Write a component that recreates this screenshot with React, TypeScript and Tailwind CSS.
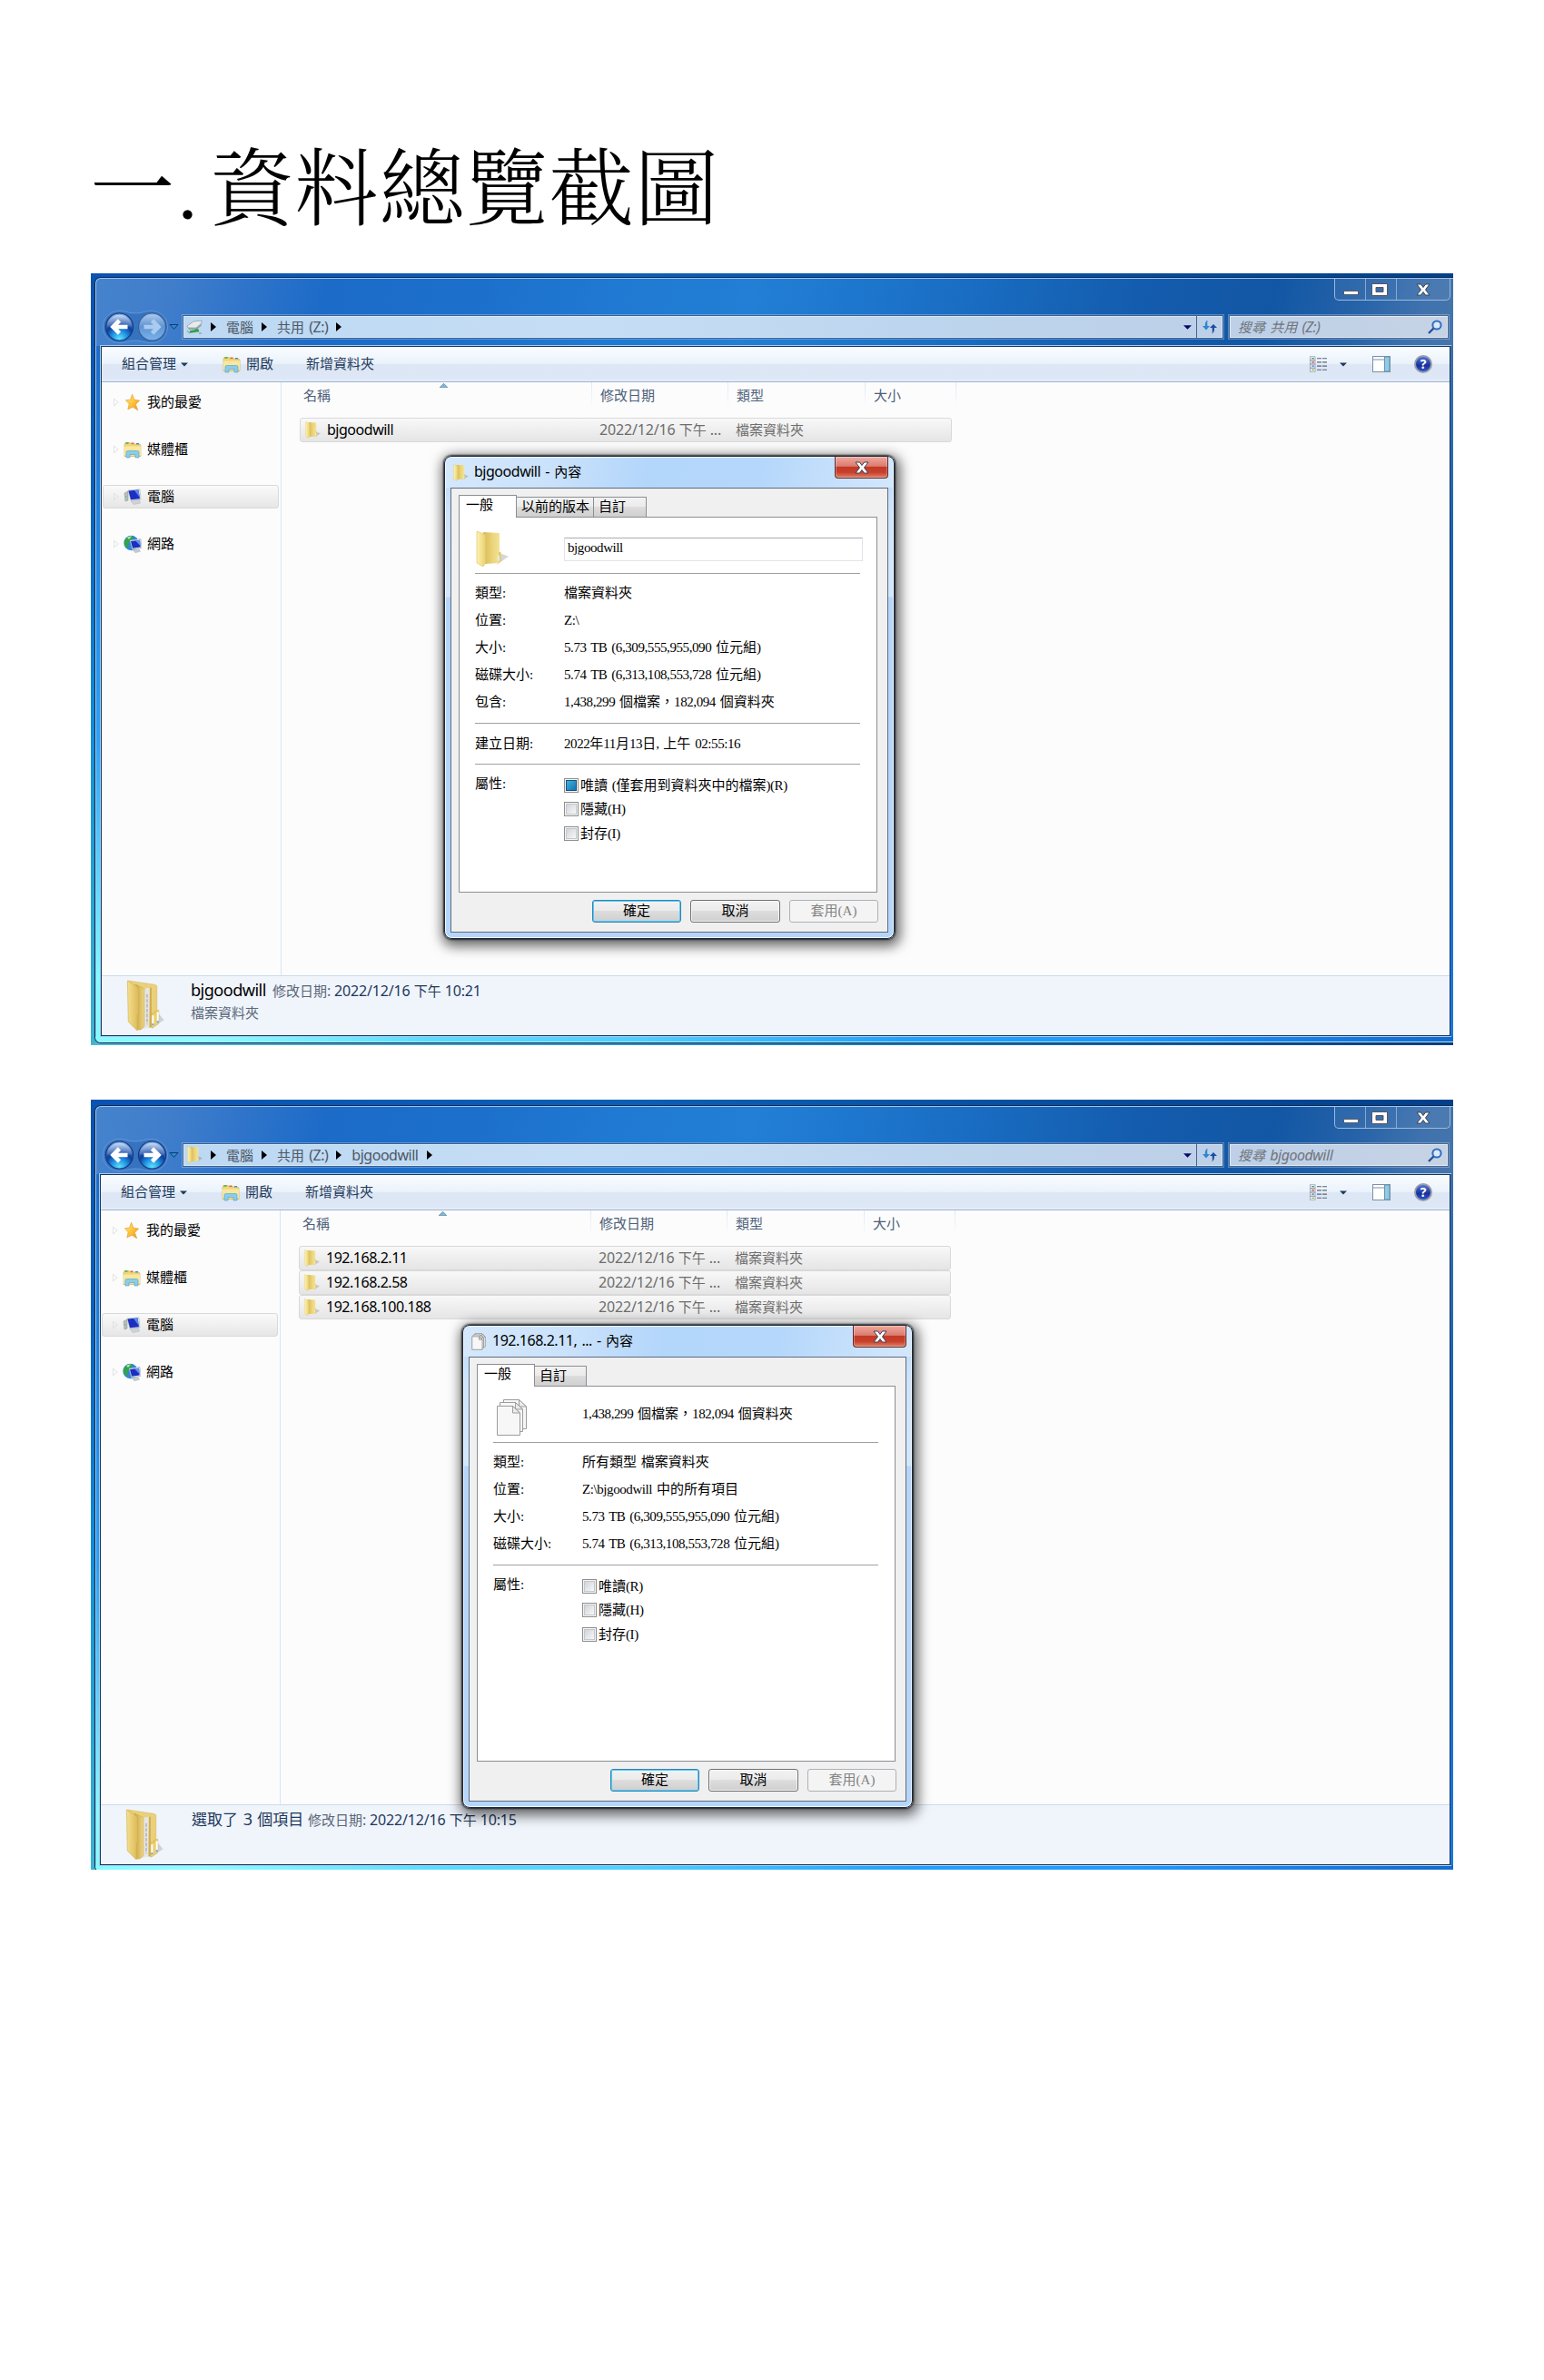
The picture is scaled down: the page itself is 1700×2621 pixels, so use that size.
import React from "react";

type Kids = { children?: React.ReactNode };

/** Splits a string into Latin and CJK runs so each gets its own size and spacing. */
function Mix({ t, k = "ui" }: { t: string; k?: "ui" | "name" | "dlg" | "wide" }) {
  const cls = {
    ui: "text-[1.067em] tracking-[-0.15px]",
    name: "text-[1.067em] tracking-[-0.03em] [word-spacing:1.5px]",
    dlg: "tracking-[-0.42px] [word-spacing:1.5px]",
    wide: "tracking-[-0.3px]",
  }[k];
  return (
    <span className="whitespace-pre">
      {t.split(/([\x20-\x7e]+)/).map((s, i) =>
        i % 2 ? (
          <span key={i} className={cls}>
            {s}
          </span>
        ) : (
          s
        )
      )}
    </span>
  );
}

/* ---------- icons ---------- */

function FolderIcon({ className }: { className: string }) {
  return (
    <svg viewBox="0 0 36 40" preserveAspectRatio="none" className={className}>
      <defs>
        <linearGradient id="fa" x1="0" x2="1">
          <stop offset="0" stopColor="#fff3b4" />
          <stop offset="1" stopColor="#e8cf6a" />
        </linearGradient>
        <linearGradient id="fb" x1="0" x2="1">
          <stop offset="0" stopColor="#d9b856" />
          <stop offset=".6" stopColor="#ecd67c" />
          <stop offset="1" stopColor="#f3e398" />
        </linearGradient>
      </defs>
      <path d="M23 37 L36 28 L28 25Z" fill="#000" opacity=".16" />
      <path d="M8 2 L26 3 V35 L10 36Z" fill="url(#fb)" />
      <path d="M25 24 l2.500 -1 v10 l-2.500 2Z" fill="#e9c65c" />
      <path d="M24 27 h2 v6 h-2z" fill="#d8f0ee" />
      <path d="M1 1 L11 5 V34 L8 39 L1 35Z" fill="url(#fa)" stroke="#d9bf62" strokeWidth=".6" />
    </svg>
  );
}

function FullFolderIcon({ className }: { className: string }) {
  return (
    <svg viewBox="0 0 42 58" className={className}>
      <defs>
        <linearGradient id="fc" x1="0" x2="1">
          <stop offset="0" stopColor="#f5e08e" />
          <stop offset="1" stopColor="#dcb958" />
        </linearGradient>
        <linearGradient id="fd" x1="0" x2="1">
          <stop offset="0" stopColor="#c9a548" />
          <stop offset="1" stopColor="#eed582" />
        </linearGradient>
      </defs>
      <path d="M28 54 L42 45 L35 37Z" fill="#000" opacity=".14" />
      <path d="M2 1 L32 5.500 Q34 6 34 8 V50 L14 55Z" fill="#ead07a" stroke="#d2b24e" strokeWidth=".5" />
      <path d="M20 10 L26 9 V53 L19 55Z" fill="#e6e6e4" />
      <path d="M23 16 V50" stroke="#b4b4bc" strokeWidth="1.600" strokeDasharray="4 1.500" />
      <path d="M26 9 L28 9 V53 L25.500 54Z" fill="#d2ae50" />
      <path d="M28 38 l4 -1 v-2 l4 -1 v15 l-7 5 h-1z" fill="#ecd070" stroke="#caa43c" strokeWidth=".5" />
      <path d="M28.500 40 h2 v11 h-2z M34 36 h2 v12 h-2z" fill="#fff" />
      <path d="M28.500 49 h2 v2 h-2z M34 46 h2 v2 h-2z" fill="#5a9df0" />
      <path d="M10 5 L20 10 V52 L16 56 L12 56Z" fill="url(#fd)" stroke="#c9a640" strokeWidth=".5" />
      <path d="M1 1 L12 8 L13.500 12 V37 L12 39 V57 L2 47Z" fill="url(#fc)" stroke="#cfae4a" strokeWidth=".6" />
    </svg>
  );
}

function LibraryIcon({ className }: { className: string }) {
  return (
    <svg viewBox="0 0 20 18" className={className}>
      <path d="M1 3 l1-2 h5 l1 1.500 h10 l1 1.500 v12 H1z" fill="#f0d678" stroke="#c9ab4c" strokeWidth=".6" />
      <path d="M2.500 .8 h3 v1.400 h-3z" fill="#3ba84a" />
      <path d="M8.500 1 h3 v1.400 h-3z" fill="#e2593a" />
      <path d="M14 1.500 h3 v1.400 h-3z" fill="#3b8fe0" />
      <path d="M1 5 h18 v10 H1z" fill="#f8e79f" />
      <path d="M3 17.500 v-6 q0-1.500 1.500-1.500 h11 q1.500 0 1.500 1.500 v6 h-4 v-3.500 h-6 v3.500z" fill="#8accec" stroke="#4f9fcb" strokeWidth=".6" />
    </svg>
  );
}

function StarIcon({ className }: { className: string }) {
  return (
    <svg viewBox="0 0 20 20" className={className}>
      <defs>
        <linearGradient id="st" x1="0" y1="0" x2="1" y2="1">
          <stop offset="0" stopColor="#fff08a" />
          <stop offset=".5" stopColor="#ffc43a" />
          <stop offset="1" stopColor="#f09018" />
        </linearGradient>
      </defs>
      <path d="M9 .8 L11.500 7 L17.500 8 L13 12.500 L15.500 19.300 L9.800 15.500 L4 18.200 L5.500 12 L1.500 7.600 L7 7Z" fill="url(#st)" stroke="#e39a30" strokeWidth=".7" />
    </svg>
  );
}

function ComputerIcon({ className }: { className: string }) {
  return (
    <svg viewBox="0 0 20 18" className={className}>
      <path d="M1 5 l4-2 v10 l-3 1z" fill="#b8bfc4" stroke="#777" strokeWidth=".4" />
      <path d="M2 8 h1.500 v1.500 h-1.500z" fill="#5fd24b" />
      <path d="M5 2 L18 1 L19 12 L8 13Z" fill="#dfe6ee" stroke="#98a4b0" strokeWidth=".5" />
      <path d="M5.500 2.500 L16.500 1.600 L18 11.200 L8 12.300Z" fill="#1b2fc0" />
      <path d="M12 2 L16.500 1.600 L17.500 9.500Z" fill="#5b86ee" />
      <path d="M8 13.500 L17 12.500 L18.500 16 L11 17.500Z" fill="#cfd4d8" stroke="#9aa" strokeWidth=".4" />
    </svg>
  );
}

function NetworkIcon({ className }: { className: string }) {
  return (
    <svg viewBox="0 0 20 20" className={className}>
      <circle cx="8.500" cy="9" r="8.200" fill="#2f86d8" />
      <path d="M2 5 Q6 0 11 1.500 L9 6 L5 9 L6 13 L3 14 Q0 10 2 5Z" fill="#35a53e" />
      <path d="M4 3 Q7 1 9 1.500 L6 5Z" fill="#b9ecc0" />
      <path d="M7 6 L19 4.500 L20 14.500 L9.500 16Z" fill="#e5eaf0" stroke="#8f9ba8" strokeWidth=".5" />
      <path d="M8 7 L18 5.700 L18.700 13.500 L10 14.800Z" fill="#1a2fc0" />
      <path d="M13 6.400 L18 5.700 L18.500 12Z" fill="#5f8cf0" />
      <path d="M10 16.500 L17 15.500 L18.500 18.300 L13 19.700Z" fill="#c7ccd0" stroke="#9aa" strokeWidth=".4" />
    </svg>
  );
}

function DriveIcon() {
  return (
    <svg viewBox="0 0 18 16" className="h-[16px] w-[18px]">
      <path d="M1 7 L8 2 L17 1 L17 4 L11 9 L2 9Z" fill="#e8ebee" stroke="#8a949c" strokeWidth=".7" />
      <path d="M2 9 L11 9 L17 4 L16.500 7 L11 11.500 L3 11Z" fill="#9aa3aa" />
      <path d="M10 10 h3 v3 h-3z" fill="#35b44a" />
      <path d="M4 13.500 L14 12" stroke="#2aa040" strokeWidth="2.400" />
      <path d="M1 12.500 L4 15 M14 15 h3" stroke="#8fa8b8" strokeWidth="1.400" />
    </svg>
  );
}

function PagesIcon({ className }: { className: string }) {
  return (
    <svg viewBox="0 0 34 42" className={className}>
      {[
        [8, 1],
        [4, 4],
        [1, 8],
      ].map(([x, y], i) => (
        <g key={i} transform={`translate(${x} ${y})`}>
          <path d="M0 .5 H17 L25 8 V32.500 H0Z" fill="#f7f7f7" stroke="#9d9d9d" strokeWidth="1" vectorEffect="non-scaling-stroke" />
          <path d="M17 .5 V8 H25Z" fill="#ececec" stroke="#8c8c8c" strokeWidth=".8" vectorEffect="non-scaling-stroke" />
        </g>
      ))}
    </svg>
  );
}

function NavButtons({ forward }: { forward: boolean }) {
  return (
    <svg viewBox="0 0 95 38" className="block h-[38px] w-[95px] shrink-0">
      <defs>
        <radialGradient id="nb" cx=".5" cy=".95" r=".9">
          <stop offset="0" stopColor="#5fe6ff" />
          <stop offset=".35" stopColor="#1d8ce0" />
          <stop offset=".6" stopColor="#0c3f9c" />
          <stop offset="1" stopColor="#7fa8e0" />
        </radialGradient>
        <linearGradient id="nd" x1="0" y1="0" x2="0" y2="1">
          <stop offset="0" stopColor="#9dbfe8" />
          <stop offset=".5" stopColor="#5f94d4" />
          <stop offset="1" stopColor="#79b4ea" />
        </linearGradient>
        <linearGradient id="ng" x1="0" y1="0" x2="0" y2="1">
          <stop offset="0" stopColor="#cfe0f8" stopOpacity=".9" />
          <stop offset="1" stopColor="#5c86c8" stopOpacity=".3" />
        </linearGradient>
      </defs>
      <path d="M25 1.500 C33 1.500 35 4 43 4 C51 4 53 1.500 61 1.500 A17.500 17.500 0 0 1 61 36.500 C53 36.500 51 34 43 34 C35 34 33 36.500 25 36.500 A17.500 17.500 0 0 1 25 1.500Z" fill="#2a66b4" fillOpacity=".5" stroke="#7fb0e6" strokeOpacity=".55" />
      <circle cx="25.500" cy="19" r="15" fill="url(#nb)" stroke="#143a7c" strokeWidth="1.200" />
      <path d="M11.800 18 A13.800 13.800 0 0 1 39.200 18 Q25 22 11.800 18Z" fill="url(#ng)" />
      <circle cx="61.500" cy="19" r="15" fill={forward ? "url(#nb)" : "url(#nd)"} stroke={forward ? "#143a7c" : "#3c5f94"} strokeWidth="1.200" />
      <path d="M47.800 18 A13.800 13.800 0 0 1 75.200 18 Q61 22 47.800 18Z" fill="url(#ng)" opacity={forward ? 1 : 0.4} />
      <path d="M34.500 19 H19 M25.500 12 L18.500 19 L25.500 26" fill="none" stroke="#fff" strokeWidth="4.600" />
      <path d="M52.500 19 H68 M61.500 12 L68.500 19 L61.500 26" fill="none" stroke={forward ? "#fff" : "#a9cbf0"} strokeWidth="4.600" />
      <path d="M81 16.500 h9 l-4.500 5z" fill="#2c8ad0" stroke="#0c3c74" strokeWidth="1" />
    </svg>
  );
}

function XGlyph({ w, fill }: { w: number; fill: string }) {
  return (
    <svg viewBox="0 0 16 14" style={{ width: w }}>
      <path d="M1 1 H5.500 L8 4.500 L10.500 1 H15 L10.500 7 L15 13 H10.500 L8 9.500 L5.500 13 H1 L5.500 7Z" fill={fill} stroke="#3a4254" strokeWidth="1" />
    </svg>
  );
}

const CrumbArrow = () => (
  <span className="flex w-6 justify-center">
    <svg viewBox="0 0 6 10" className="h-[10px] w-[6px]">
      <path d="M0 0 L6 5 L0 10Z" fill="#000" />
    </svg>
  </span>
);

const DownArrow = ({ className }: { className: string }) => (
  <svg viewBox="0 0 10 5" className={className}>
    <path d="M0 0 H10 L5 5Z" fill="currentColor" />
  </svg>
);

/* ---------- explorer window ---------- */

function Header({ crumbs, search, second }: { crumbs: string[]; search: string; second: boolean }) {
  return (
    <div className="h-[75px] rounded-tl-[6px] border-t border-l border-[#9fc4ee] bg-[linear-gradient(105deg,#4683cd_0%,#3f7dcb_6%,#2f74ca_11%,#1c6bc8_17%,#1c70cc_28%,#2079d2_38%,#227fd5_48%,#1d75cc_57%,#186abf_66%,#145cae_76%,#1257a5_86%,#2562a8_92%,#3f72ae_97%,#4675ab_100%)]">
      <div className="flex h-6 justify-end pr-[3px]">
        <div className="flex h-6 w-[128px] rounded-b-[5px] border border-t-0 border-[#9fb9da] bg-white/5">
          <div className="flex w-[34px] items-end justify-center border-r border-[#8aa8cf] pb-[5px]">
            <span className="ml-px h-[5px] w-[17px] border border-[#5b5b66] bg-white" />
          </div>
          <div className="flex w-[34px] items-center justify-center border-r border-[#8aa8cf] pr-[3px]">
            <svg viewBox="0 0 18 14" className="h-[14px] w-[18px]">
              <path d="M.5 .5 H17.500 V13.500 H.5Z M5 4.500 V9.500 H13 V4.500Z" fillRule="evenodd" fill="#fff" stroke="#5b5560" />
            </svg>
          </div>
          <div className="flex flex-1 items-center justify-center">
            <XGlyph w={16} fill="#fff" />
          </div>
        </div>
      </div>
      <div className="mt-4 flex h-[26px] items-center">
        <NavButtons forward={second} />
        <div className="flex h-[26px] w-[1146px] items-stretch border border-[#3d608f] bg-[linear-gradient(to_right,#bcd8f3,#c6def5_40%,#bdd5ee_70%,#bdd0e8)] text-[15px] text-[#4d5866] shadow-[0_0_0_1px_rgba(200,225,250,0.35)] ring-1 ring-white/40 ring-inset">
          <div className="flex flex-1 items-center pb-px pl-[3px]">
            <span className="flex w-[18px] justify-center">
              {second ? <FolderIcon className="h-[19px] w-[17px]" /> : <DriveIcon />}
            </span>
            <CrumbArrow />
            {crumbs.map((c) => (
              <React.Fragment key={c}>
                <span className="pl-[2px] leading-[20px]">
                  <Mix t={c} k="name" />
                </span>
                <CrumbArrow />
              </React.Fragment>
            ))}
          </div>
          <div className="flex w-5 items-center justify-center text-[#06096b]">
            <DownArrow className="h-[5px] w-[9px]" />
          </div>
          <div className="flex w-[29px] items-center justify-center border-l border-[#48658f]">
            <svg viewBox="0 0 18 16" className="h-[16px] w-[18px]">
              <path d="M6.500 .8 Q3.500 2 3.800 7 H1 L5 11.500 L9 7 H6.400 Q6 3 6.500 .8Z" fill="#2f86d2" />
              <path d="M11.500 15.500 Q14.500 13.500 14 9 H17 L13 5 L9 9 H11.600 Q12.200 13 11.500 15.500Z" fill="#1a4fa0" />
            </svg>
          </div>
        </div>
        <div className="ml-[6px] flex h-[26px] w-[242px] items-center justify-between border border-[#4a678f] bg-[linear-gradient(to_right,#bdd0e8,#c6d3e5)] pr-[6px] pb-px pl-[9px] text-[15px] text-[#70757c] italic shadow-[0_0_0_1px_rgba(200,225,250,0.35)] ring-1 ring-white/50 ring-inset">
          <Mix t={search} k="name" />
          <svg viewBox="0 0 16 16" className="h-[16px] w-[16px]">
            <circle cx="10" cy="6" r="4.600" fill="#dce9f6" stroke="#2f6fc4" strokeWidth="2" />
            <path d="M6.500 9.500 L1 15" stroke="#2b4f9a" strokeWidth="2.400" />
          </svg>
        </div>
      </div>
    </div>
  );
}

function Toolbar() {
  return (
    <div className="flex h-[39px] items-center border-b border-[#a0b3d1] bg-[linear-gradient(to_bottom,#fafdff_0%,#eaf2fb_48%,#dce6f4_52%,#dde7f5_92%,#e6eefa_100%)] pb-[2px] text-[15px] leading-[20px] text-[#1e395b]">
      <span className="ml-[22px]">組合管理</span>
      <DownArrow className="mt-[2px] ml-[5px] h-[5px] w-[8px]" />
      <LibraryIcon className="mt-[2px] ml-[38px] h-[19px] w-[20px]" />
      <span className="ml-[6px]">開啟</span>
      <span className="ml-[36px]">新增資料夾</span>
      <div className="mt-[2px] mr-[19px] ml-auto flex items-center">
        <svg viewBox="0 0 20 18" className="h-[18px] w-[20px]">
          {["#58a868", "#e05040", "#5088e0", "#a0c040"].map((c, i) => (
            <g key={c} transform={`translate(0 ${i * 4.2 + 0.5})`}>
              <rect x=".5" y=".3" width="5.500" height="3.800" fill="#fff" stroke="#8d9ab0" strokeWidth=".8" />
              <rect x="2" y="1.500" width="3" height="1.400" fill={c} />
              <path d="M8 2.200 h5 M14 2.200 h5" stroke="#5c6678" strokeWidth="1.100" />
            </g>
          ))}
        </svg>
        <DownArrow className="ml-[13px] h-[5px] w-[8px]" />
        <svg viewBox="0 0 20 18" className="ml-[28px] h-[18px] w-[20px]">
          <rect x=".5" y=".5" width="19" height="17" fill="#fff" stroke="#7d8ea8" />
          <path d="M.5 4 h13" stroke="#7d8ea8" />
          <rect x="13.500" y="1" width="5.500" height="16" fill="#8ecbe4" stroke="#6a93b0" />
        </svg>
        <span className="ml-[26px] flex h-5 w-5 items-center justify-center rounded-full border-2 border-[#9a9ea8] bg-[linear-gradient(to_bottom,#4e74d8,#1a2f9c_60%,#2c59d0)] text-[14px] leading-none font-bold text-white">
          ?
        </span>
      </div>
    </div>
  );
}

function SideItem({ icon, label, selected }: { icon: React.ReactNode; label: string; selected?: boolean }) {
  return (
    <div
      className={
        "mb-[26px] flex h-[26px] items-center rounded-[3px] border pl-[11px] " +
        (selected ? "border-[#d9d9d9] bg-[linear-gradient(to_bottom,#fafafa,#e6e6e6)]" : "border-transparent")
      }
    >
      <svg viewBox="0 0 7 10" className="h-[10px] w-[6px]">
        <path d="M.5 .5 L6 5 L.5 9.500Z" fill="none" stroke="#dcdcdc" />
      </svg>
      <span className="ml-[5px] flex w-5 justify-center">{icon}</span>
      <span className="ml-[6px] pb-[3px] text-[15px] leading-[20px] text-black">{label}</span>
    </div>
  );
}

function HeadCell({ w, children }: Kids & { w: string }) {
  return (
    <div className={"flex h-[28px] items-center border-r pl-[9px] [border-image:linear-gradient(to_bottom,#dbe8f7,#fcfcfc)_1] " + w}>{children}</div>
  );
}

function Row({ name }: { name: string }) {
  return (
    <div className="flex h-[27px] w-[718px] items-center rounded-[3px] border border-[#d9d9d9] bg-[linear-gradient(to_bottom,#f8f8f8,#e5e5e5)] pb-[2px] text-[15px] leading-[20px] text-[#6d6d6d]">
      <FolderIcon className="mt-px ml-[5px] h-[19px] w-[17px]" />
      <span className="ml-[7px] w-[300px] text-black">
        <Mix t={name} k="name" />
      </span>
      <span className="w-[150px]">
        <Mix t="2022/12/16 下午 ..." />
      </span>
      <span>檔案資料夾</span>
    </div>
  );
}

function Explorer({
  crumbs,
  search,
  rows,
  second = false,
  details,
  children,
}: Kids & { crumbs: string[]; search: string; rows: string[]; second?: boolean; details: React.ReactNode }) {
  return (
    <section
      className={
        "relative w-[1500px] overflow-hidden bg-[linear-gradient(to_bottom,#0a52ac_0%,#0a62c0_30%,#0f8fd8_60%,#3db4cf_100%)] pl-[4px] " +
        (second ? "h-[848px]" : "h-[850px]")
      }
    >
      <div className={"-ml-[4px] bg-[linear-gradient(to_right,#0a52b4,#0b5fb4_40%,#03408c)] " + (second ? "h-[6px]" : "h-[4px]")} />
      <div className="rounded-l-[7px] border border-r-0 border-[#0c2a50] bg-[linear-gradient(to_bottom,#1d6cc8_10%,#2490ea_45%,#2f9ff4_60%,#86fbff_92%)]">
        <Header crumbs={crumbs} search={search} second={second} />
        <div className="flex">
          <div className="w-[6px] border-l border-[#9fd0f4]" />
          <div
            className={
              "flex shrink-0 flex-col border border-[#17365e] bg-[#fcfcfc] outline outline-[#a5cdf2] " +
              (second ? "-ml-px h-[761px] w-[1487px]" : "h-[760px] w-[1486px]")
            }
          >
            <Toolbar />
            <div className="flex flex-1">
              <div className="w-[198px] border-r border-[#d6e5f5] pt-[9px] pr-[2px] pl-px">
                <SideItem icon={<StarIcon className="h-[20px] w-[19px]" />} label="我的最愛" />
                <SideItem icon={<LibraryIcon className="h-[19px] w-[20px]" />} label="媒體櫃" />
                <SideItem icon={<ComputerIcon className="h-[18px] w-[20px]" />} label="電腦" selected />
                <SideItem icon={<NetworkIcon className="h-[20px] w-[20px]" />} label="網路" />
              </div>
              <div className="flex-1">
                <div className="relative flex h-[39px] text-[15px] leading-[20px] text-[#4c607a]">
                  <svg viewBox="0 0 10 5" className="absolute top-px left-[174px] h-[5px] w-[9px]">
                    <path d="M0 5 L5 0 L10 5Z" fill="#7fb6d4" stroke="#3c7190" strokeWidth=".6" />
                  </svg>
                  <HeadCell w="w-[342px] !pl-[24px]">名稱</HeadCell>
                  <HeadCell w="w-[150px]">修改日期</HeadCell>
                  <HeadCell w="w-[151px]">類型</HeadCell>
                  <HeadCell w="w-[100px]">大小</HeadCell>
                </div>
                <div className="pl-[20px]">
                  {rows.map((r) => (
                    <Row key={r} name={r} />
                  ))}
                </div>
              </div>
            </div>
            <div className="flex h-[66px] border-t border-[#cbdcec] bg-[#f0f4fb]">
              <FullFolderIcon className="mt-[4px] ml-[27px] h-[57px] w-[42px] shrink-0" />
              {details}
            </div>
          </div>
          <div className="flex-1 bg-[linear-gradient(to_bottom,#3c70ad,#1a63b8_30%,#1a78dc)]" />
        </div>
        <div className="h-[7px] rounded-bl-[6px] border-b border-[#b4f0ff] bg-[linear-gradient(to_right,#86fbff_0%,#8ffcff_8%,#5adcff_25%,#4fcfff_40%,#22a0fb_60%,#219bff_76%,#1a86ee_85%,#1469cc_100%)]" />
      </div>
      <div className="-ml-[4px] h-[4px] bg-[linear-gradient(to_right,#4fb9cf,#38a0cf_30%,#0a6ac0_70%,#033f92)]" />
      {children}
    </section>
  );
}

/* ---------- properties dialog ---------- */

function Check({ label, filled, mb }: { label: string; filled?: boolean; mb: string }) {
  return (
    <div className={"flex h-[16px] items-center " + mb}>
      <span className="h-[16px] w-[16px] border border-[#8e8f8f] bg-[#f4f4f4] p-px">
        <span
          className={
            "block h-full w-full border " +
            (filled ? "border-[#1b4f7c] bg-[linear-gradient(135deg,#3db4e0,#1673b0)]" : "border-[#c4c8cc] bg-[linear-gradient(135deg,#cfd4da,#f8f8f8)]")
          }
        />
      </span>
      <span className="ml-[2px] leading-[20px]">
        <Mix t={label} k="dlg" />
      </span>
    </div>
  );
}

const Rule = () => <div className="h-px w-[424px] bg-[#a0a0a0]" />;

function Field({ label, value }: { label: string; value: string }) {
  return (
    <div className="flex h-[30px] items-center leading-[20px]">
      <span className="w-[98px]">
        <Mix t={label} k="wide" />
      </span>
      <Mix t={value} k="dlg" />
    </div>
  );
}

function Dialog({
  icon,
  title,
  tabs,
  head,
  groups,
  attrs,
  place,
}: {
  icon: React.ReactNode;
  title: string;
  tabs: { t: string; w: string }[];
  head: React.ReactNode;
  groups: [string, string][][];
  attrs: { label: string; filled?: boolean }[];
  place: string;
}) {
  return (
    <div
      className={
        "absolute flex h-[532px] w-[496px] flex-col rounded-[8px] border border-[#1d2b3c] bg-[linear-gradient(to_bottom,#b7d8fb_0%,#cfe4fb_12%,#d3e7fc_29%,#b5d6fa_29.300%,#b5d6fa_100%)] px-[6px] pb-[6px] shadow-[0_0_2px_1px_rgba(0,0,0,0.75),2px_4px_14px_4px_rgba(0,0,0,0.6)] ring-1 ring-white/80 ring-inset " +
        place
      }
    >
      <div className="-mx-[5px] mt-px flex h-[33px] shrink-0 items-start rounded-t-[6px] bg-[linear-gradient(100deg,#d5e8fc_0%,#c9e1fb_25%,#b3d6fb_45%,#b5d7fb_70%,#d3e7fc_100%)] px-[5px]">
        <span className="mt-[7px] ml-[2px] flex w-[18px] justify-center">{icon}</span>
        <span className="mt-[4px] ml-[6px] font-['Noto_Sans','Noto_Sans_CJK_TC',sans-serif] text-[15px] leading-[22px] text-black">
          <Mix t={title} k="name" />
        </span>
        <span className="-mt-px ml-auto flex h-[24px] w-[59px] items-center justify-center rounded-b-[4px] border border-t-0 border-[#5c2a2a] bg-[linear-gradient(to_bottom,#f0a89e_0%,#dc7c70_45%,#c23a26_50%,#c8402c_75%,#e0806a_100%)] ring-1 ring-white/30 ring-inset">
          <XGlyph w={16} fill="#fff" />
        </span>
      </div>
      <div className="flex flex-1 flex-col border border-[#5f6b7c] bg-[#f0f0f0] pl-[8px] font-['Liberation_Serif','Noto_Sans_CJK_TC',serif] text-[15px] text-black">
        <div className="flex h-[31px] items-end">
          <span className="z-10 -mb-px flex h-[25px] w-[64px] items-center border border-b-0 border-[#8c8e94] bg-white pb-[3px] pl-[7px]">一般</span>
          {tabs.map(({ t, w }) => (
            <span key={t} className={"flex h-[22px] items-center border border-b-0 border-l-0 border-[#8c8e94] bg-[linear-gradient(to_bottom,#f2f2f2_0%,#ebebeb_48%,#dddddd_50%,#cfcfcf_100%)] pl-[5px] " + w}>
              {t}
            </span>
          ))}
        </div>
        <div className="h-[414px] w-[461px] border border-[#8c8e94] bg-white pl-[17px]">
          <div className="flex h-[61px]">{head}</div>
          <Rule />
          {groups.map((g, i) => (
            <div key={i}>
              <div className={i ? "pt-[7px] pb-[7px]" : "pt-[6px] pb-[8px]"}>
                {g.map(([a, b]) => (
                  <Field key={a} label={a} value={b} />
                ))}
              </div>
              <Rule />
            </div>
          ))}
          <div className="flex pt-[15px]">
            <span className="-mt-[4px] w-[98px] leading-[20px]">
              <Mix t="屬性:" k="wide" />
            </span>
            <div>
              {attrs.map((a, i) => (
                <Check key={a.label} {...a} mb={i ? "mb-[11px]" : "mb-[10px]"} />
              ))}
            </div>
          </div>
        </div>
        <div className="mt-[8px] flex gap-[10px] pl-[147px]">
          <span className="flex h-[25px] w-[98px] items-center justify-center rounded-[3px] border border-[#3c7fb1] bg-[linear-gradient(to_bottom,#f2f2f2_0%,#ebebeb_48%,#dddddd_50%,#cfcfcf_100%)] ring-1 ring-[#48d0f8] ring-inset">確定</span>
          <span className="flex h-[25px] w-[99px] items-center justify-center rounded-[3px] border border-[#707070] bg-[linear-gradient(to_bottom,#f2f2f2_0%,#ebebeb_48%,#dddddd_50%,#cfcfcf_100%)] ring-1 ring-white/80 ring-inset">取消</span>
          <span className="flex h-[25px] w-[98px] items-center justify-center rounded-[3px] border border-[#adb2b5] bg-[#f4f4f4] text-[#838383]">套用(A)</span>
        </div>
      </div>
    </div>
  );
}

export default function App() {
  return (
    <main className="h-[2621px] w-[1700px] bg-white pl-[100px] font-['Noto_Sans','Noto_Sans_CJK_TC',sans-serif]">
      <h1 className="flex h-[301px] items-baseline pt-[141px] font-['Noto_Serif_CJK_TC','Noto_Sans_CJK_TC',serif] text-[93.500px] leading-[120px] font-light text-black">
        <span className="-ml-px">一</span>
        <span className="w-[38px] pl-[6px] font-['Liberation_Serif'] text-[64px] font-bold">.</span>
        <span>資料總覽截圖</span>
      </h1>
      <Explorer
        crumbs={["電腦", "共用 (Z:)"]}
        search="搜尋 共用 (Z:)"
        rows={["bjgoodwill"]}
        details={
          <div className="ml-[29px] pt-[3px] leading-[25px]">
            <div className="flex items-baseline text-[15px] text-[#5a6779]">
              <span className="w-[90px] text-[17px] text-black">
                <Mix t="bjgoodwill" k="name" />
              </span>
              <span className="w-[68px]">
                <Mix t="修改日期:" />
              </span>
              <span className="text-[#1e395b]">
                <Mix t="2022/12/16 下午 10:21" />
              </span>
            </div>
            <div className="text-[15px] leading-[22px] text-[#5a6779]">檔案資料夾</div>
          </div>
        }
      >
        <Dialog
          place="left-[389px] top-[201px]"
          icon={<FolderIcon className="h-[19px] w-[17px]" />}
          title="bjgoodwill - 內容"
          tabs={[
            { t: "以前的版本", w: "w-[85px]" },
            { t: "自訂", w: "w-[58px]" },
          ]}
          head={
            <>
              <FolderIcon className="mt-[14px] ml-[1px] h-[41px] w-[36px]" />
              <span className="mt-[22px] ml-[61px] flex h-[26px] w-[329px] items-center border border-[#e2e3ea] border-t-[#abadb3] pb-[3px] pl-[3px]">
                <Mix t="bjgoodwill" k="dlg" />
              </span>
            </>
          }
          groups={[
            [
              ["類型:", "檔案資料夾"],
              ["位置:", "Z:\\"],
              ["大小:", "5.73 TB (6,309,555,955,090 位元組)"],
              ["磁碟大小:", "5.74 TB (6,313,108,553,728 位元組)"],
              ["包含:", "1,438,299 個檔案，182,094 個資料夾"],
            ],
            [["建立日期:", "2022年11月13日, 上午 02:55:16"]],
          ]}
          attrs={[{ label: "唯讀 (僅套用到資料夾中的檔案)(R)", filled: true }, { label: "隱藏(H)" }, { label: "封存(I)" }]}
        />
      </Explorer>
      <div className="h-[60px]" />
      <Explorer
        second
        crumbs={["電腦", "共用 (Z:)", "bjgoodwill"]}
        search="搜尋 bjgoodwill"
        rows={["192.168.2.11", "192.168.2.58", "192.168.100.188"]}
        details={
          <div className="ml-[31px] flex items-baseline pt-[3px] text-[15px] leading-[25px] text-[#5a6779]">
            <span className="w-[128px] text-[17px] text-[#1e395b]">
              <Mix t="選取了 3 個項目" k="name" />
            </span>
            <span className="w-[68px]">
              <Mix t="修改日期:" />
            </span>
            <span className="text-[#1e395b]">
              <Mix t="2022/12/16 下午 10:15" />
            </span>
          </div>
        }
      >
        <Dialog
          place="left-[409px] top-[248px]"
          icon={<PagesIcon className="h-[19px] w-[16px]" />}
          title="192.168.2.11, ... - 內容"
          tabs={[{ t: "自訂", w: "w-[57px]" }]}
          head={
            <>
              <PagesIcon className="mt-[13px] ml-[3px] h-[42px] w-[35px]" />
              <span className="mt-[20px] ml-[60px] leading-[20px]">
                <Mix t="1,438,299 個檔案，182,094 個資料夾" k="dlg" />
              </span>
            </>
          }
          groups={[
            [
              ["類型:", "所有類型 檔案資料夾"],
              ["位置:", "Z:\\bjgoodwill 中的所有項目"],
              ["大小:", "5.73 TB (6,309,555,955,090 位元組)"],
              ["磁碟大小:", "5.74 TB (6,313,108,553,728 位元組)"],
            ],
          ]}
          attrs={[{ label: "唯讀(R)" }, { label: "隱藏(H)" }, { label: "封存(I)" }]}
        />
      </Explorer>
    </main>
  );
}
